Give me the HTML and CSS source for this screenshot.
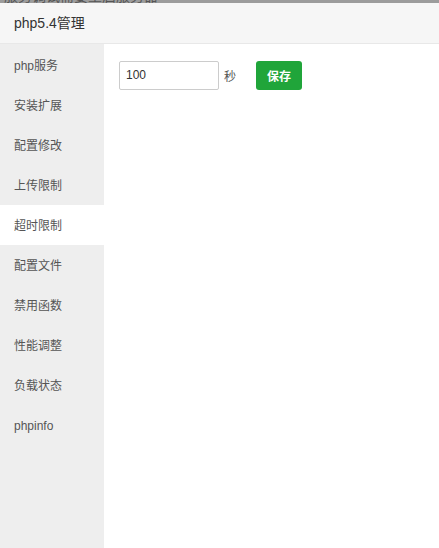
FILE: index.html
```html
<!DOCTYPE html>
<html lang="zh-CN">
<head>
  <meta charset="UTF-8">
  <title>php5.4管理</title>
  <link rel="stylesheet" href="styles.css">
</head>
<body>
  <div class="behind">
    <span>服务调试需要重启服务器</span>
  </div>

  <div class="layer">
    <div class="layer-title">php5.4管理</div>

    <div class="layer-body">
      <ul class="side-menu">
        <li>php服务</li>
        <li>安装扩展</li>
        <li>配置修改</li>
        <li>上传限制</li>
        <li class="active">超时限制</li>
        <li>配置文件</li>
        <li>禁用函数</li>
        <li>性能调整</li>
        <li>负载状态</li>
        <li>phpinfo</li>
      </ul>

      <div class="content">
        <div class="form-row">
          <input type="text" class="field" value="100">
          <span class="unit">秒</span>
          <button class="btn-save">保存</button>
        </div>
      </div>
    </div>
  </div>
</body>
</html>
```

FILE: styles.css
```css
/* General */
html, body {
  height: 100%;
}

body {
  margin: 0;
  font-family: "Liberation Sans", "Noto Sans CJK SC", sans-serif;
  background-color: #fff;
  color: #555;
  display: flex;
  flex-direction: column;
  overflow: hidden;
}

/* page behind the popup */
.behind {
  height: 3px;
  overflow: hidden;
  background-color: #9c9c9c;
  flex-shrink: 0;
}

.behind span {
  display: block;
  margin-top: -11px;
  padding-left: 4px;
  font-size: 14px;
  line-height: 14px;
  color: #555;
}

/* popup */
.layer {
  flex: 1;
  display: flex;
  flex-direction: column;
  min-height: 0;
}

.layer-title {
  height: 40px;
  line-height: 40px;
  padding-left: 14px;
  font-size: 14px;
  color: #333;
  background-color: #f6f6f6;
  border-bottom: 1px solid #e8e8e8;
  flex-shrink: 0;
}

.layer-body {
  flex: 1;
  display: flex;
}

.side-menu {
  width: 104px;
  margin: 0;
  padding: 1px 0 0;
  list-style: none;
  background-color: #eee;
}

.side-menu li {
  height: 40px;
  line-height: 42px;
  padding-left: 14px;
  font-size: 12px;
  color: #555;
}

.side-menu li.active {
  background-color: #fff;
}

.content {
  flex: 1;
  padding: 16px 15px;
}

.form-row {
  display: flex;
  align-items: center;
}

.field {
  box-sizing: border-box;
  width: 100px;
  height: 29px;
  padding: 0 6px;
  font-family: inherit;
  font-size: 12px;
  color: #333;
  border: 1px solid #ccc;
  border-radius: 2px;
  outline: none;
}

.unit {
  margin-left: 5px;
  font-size: 12px;
  color: #555;
}

.btn-save {
  margin-left: 20px;
  margin-top: 1px;
  width: 46px;
  height: 29px;
  padding: 0;
  font-family: inherit;
  font-size: 12px;
  font-weight: bold;
  color: #fff;
  background-color: #20a53a;
  border: none;
  border-radius: 3px;
  cursor: pointer;
}
```
